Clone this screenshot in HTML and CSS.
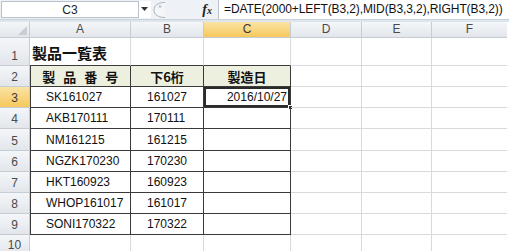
FILE: index.html
```html
<!DOCTYPE html>
<html lang="ja">
<head>
<meta charset="utf-8">
<link rel="stylesheet" href="styles.css">
</head>
<body>
<div class="app">
  <div class="fbar">
    <div class="namebox">C3</div>
    <div class="nb-arrow"><svg width="8" height="5" viewBox="0 0 8 5"><path d="M0 0h7L3.5 4z" fill="#333"/></svg></div>
    <div class="grip"><svg width="14" height="18" viewBox="0 0 14 18"><path d="M13 1.5C6 1.5 2 4.5 2 9s4 7.5 11 7.5" fill="#f4f6f8" stroke="#a9b2bd"/><circle cx="8" cy="5.5" r="1.6" fill="#c8ced6"/></svg></div>
    <div class="fx">f<span>x</span></div>
    <div class="formula">=DATE(2000+LEFT(B3,2),MID(B3,3,2),RIGHT(B3,2))</div>
  </div>
  <div class="sheet">
    <div class="corner"><svg width="9" height="9" viewBox="0 0 9 9"><path d="M9 0v9H0z" fill="#c9ced5"/></svg></div>
    <div class="ch">A</div>
    <div class="ch">B</div>
    <div class="ch sel">C</div>
    <div class="ch">D</div>
    <div class="ch">E</div>
    <div class="ch last">F</div>

    <div class="rh">1</div>
    <div class="c title tt">製品一覧表</div>
    <div class="c tt"></div>
    <div class="c tt"></div>
    <div class="c"></div><div class="c"></div><div class="c last"></div>

    <div class="rh">2</div>
    <div class="c t tl hd spaced">製 品 番 号</div>
    <div class="c t hd">下6桁</div>
    <div class="c t hd">製造日</div>
    <div class="c"></div><div class="c"></div><div class="c last"></div>

    <div class="rh sel">3</div>
    <div class="c t tl code">SK161027</div>
    <div class="c t num">161027</div>
    <div class="c t date active">2016/10/27<span class="handle"></span></div>
    <div class="c"></div><div class="c"></div><div class="c last"></div>

    <div class="rh">4</div>
    <div class="c t tl code">AKB170111</div>
    <div class="c t num">170111</div>
    <div class="c t"></div>
    <div class="c"></div><div class="c"></div><div class="c last"></div>

    <div class="rh">5</div>
    <div class="c t tl code">NM161215</div>
    <div class="c t num">161215</div>
    <div class="c t"></div>
    <div class="c"></div><div class="c"></div><div class="c last"></div>

    <div class="rh">6</div>
    <div class="c t tl code">NGZK170230</div>
    <div class="c t num">170230</div>
    <div class="c t"></div>
    <div class="c"></div><div class="c"></div><div class="c last"></div>

    <div class="rh">7</div>
    <div class="c t tl code">HKT160923</div>
    <div class="c t num">160923</div>
    <div class="c t"></div>
    <div class="c"></div><div class="c"></div><div class="c last"></div>

    <div class="rh">8</div>
    <div class="c t tl code">WHOP161017</div>
    <div class="c t num">161017</div>
    <div class="c t"></div>
    <div class="c"></div><div class="c"></div><div class="c last"></div>

    <div class="rh">9</div>
    <div class="c t tl code">SONI170322</div>
    <div class="c t num">170322</div>
    <div class="c t"></div>
    <div class="c"></div><div class="c"></div><div class="c last"></div>

    <div class="rh">10</div>
    <div class="c"></div><div class="c"></div><div class="c"></div>
    <div class="c"></div><div class="c"></div><div class="c last"></div>
  </div>
</div>
</body>
</html>
```

FILE: styles.css
```css
* { box-sizing: border-box; }
html, body { margin: 0; padding: 0; background: #ffffff; }
body {
  width: 509px;
  height: 251px;
  overflow: hidden;
  font-family: "Liberation Sans", "Noto Sans CJK JP", sans-serif;
  font-size: 12px;
  color: #111;
}
.app { width: 509px; height: 251px; overflow: hidden; background: #dfe5ec; }

.fbar {
  height: 20px;
  display: flex;
  align-items: stretch;
  background: #eef2f6;
  border-bottom: 1px solid #c9d1da;
  margin-bottom: 2px;
}
.namebox {
  width: 138px;
  margin: 1px 0 1px 1px;
  background: #fff;
  border: 1px solid #b9c2cc;
  text-align: center;
  line-height: 16px;
  color: #222;
}
.nb-arrow {
  width: 12px;
  display: flex;
  align-items: center;
  justify-content: center;
  background: #fff;
  margin: 1px 0;
}
.grip {
  width: 14px;
  display: flex;
  align-items: center;
  margin-left: 1px;
}
.fx {
  width: 52px;
  text-align: right;
  padding-right: 6px;
  font-family: "Liberation Serif", serif;
  font-style: italic;
  font-weight: bold;
  font-size: 14px;
  line-height: 19px;
  color: #222;
}
.fx span { font-size: 10px; }
.formula {
  flex: 1;
  background: #fff;
  border-left: 1px solid #b9c2cc;
  padding-left: 5px;
  line-height: 19px;
  white-space: nowrap;
  overflow: hidden;
  color: #111;
  letter-spacing: -0.1px;
}

.sheet {
  display: grid;
  grid-template-columns: 30px 101px 73px 87px 71px 70px 75px;
  grid-template-rows: 16px 28px 21px 21px 21px 22px 21px 21px 21px 21px 20px;
  background: #fff;
}
.corner, .ch, .rh {
  background: linear-gradient(#f4f6f9, #e2e6eb);
  border-right: 1px solid #c6ccd3;
  border-bottom: 1px solid #c6ccd3;
  color: #4a4a4a;
}
.corner {
  display: flex;
  align-items: flex-end;
  justify-content: flex-end;
  padding: 0 2px 2px 0;
}
.ch {
  text-align: center;
  line-height: 15px;
}
.ch.last { border-right: none; }
.rh {
  text-align: center;
  display: flex;
  align-items: flex-end;
  justify-content: center;
  padding-bottom: 1px;
  line-height: 15px;
}
.ch.sel, .rh.sel {
  background: linear-gradient(#fbe3a4, #f5c85c);
  color: #3a3a3a;
}

.c {
  position: relative;
  border-right: 1px solid #d8dadd;
  border-bottom: 1px solid #d8dadd;
  white-space: nowrap;
  display: flex;
  align-items: flex-end;
  padding-bottom: 2px;
  line-height: 15px;
}
.c.last { border-right: none; }
.c.tt { border-bottom-color: #3a3a3a; }
.c.t { border-right-color: #3a3a3a; border-bottom-color: #3a3a3a; }
.c.tl { box-shadow: inset 1px 0 0 #3a3a3a; }

.title {
  font-family: "Noto Sans CJK JP", sans-serif;
  font-weight: bold;
  font-size: 15px;
  padding-left: 2px;
  padding-bottom: 3px;
  line-height: 18px;
}
.hd {
  background: #edefdf;
  font-family: "Noto Sans CJK JP", sans-serif;
  font-weight: bold;
  font-size: 13px;
  justify-content: center;
  line-height: 17px;
  padding-bottom: 1px;
}
.hd.tl { box-shadow: inset 1px 0 0 #3a3a3a; }
.spaced { letter-spacing: 2.5px; padding-left: 3px; }
.code { padding-left: 16px; }
.num { padding-left: 16px; }
.date { justify-content: flex-end; padding-right: 3px; }
.active { box-shadow: inset 0 0 0 2px #2b2b2b; }
.handle {
  position: absolute;
  right: -3px;
  bottom: -3px;
  width: 5px;
  height: 5px;
  background: #2b2b2b;
  border: 1px solid #fff;
}
```
